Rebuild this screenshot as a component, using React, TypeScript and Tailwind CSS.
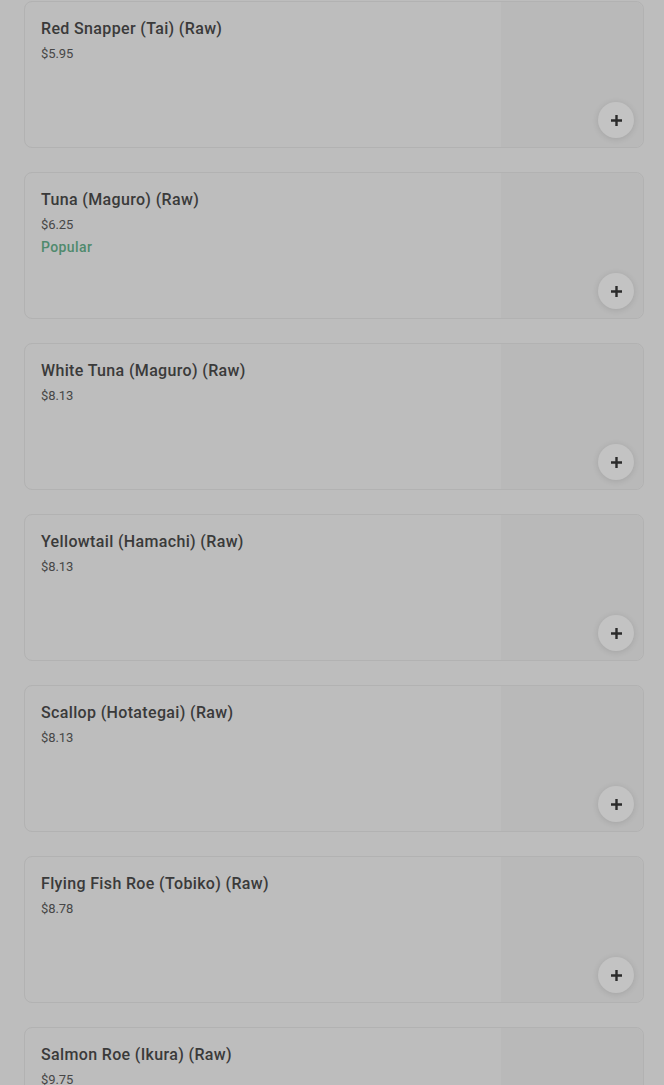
import React from 'react';

type MenuItemTypes = {
  name: string;
  price: string;
  popular?: boolean;
};

const items: MenuItemTypes[] = [
  { name: 'Red Snapper (Tai) (Raw)', price: '$5.95' },
  { name: 'Tuna (Maguro) (Raw)', price: '$6.25', popular: true },
  { name: 'White Tuna (Maguro) (Raw)', price: '$8.13' },
  { name: 'Yellowtail (Hamachi) (Raw)', price: '$8.13' },
  { name: 'Scallop (Hotategai) (Raw)', price: '$8.13' },
  { name: 'Flying Fish Roe (Tobiko) (Raw)', price: '$8.78' },
  { name: 'Salmon Roe (Ikura) (Raw)', price: '$9.75' },
];

const PlusIcon = () => (
  <svg width="13" height="13" viewBox="0 0 13 13" fill="none">
    <path d="M6.5 1v11M1 6.5h11" stroke="#2b2b2b" strokeWidth="2.4" />
  </svg>
);

const MenuItem: React.FC<MenuItemTypes> = ({ name, price, popular }) => {
  return (
    <div className="flex h-[147px] shrink-0 rounded-lg border border-[#b2b2b2] bg-[#bdbdbd]">
      <div className="flex flex-1 flex-col px-4 pt-[15px]">
        <p className="text-[16px] leading-6 font-medium tracking-[0.35px] text-[#3a3a3a]">{name}</p>
        <p className="mt-[3px] text-[13px] leading-5 tracking-[-0.1px] text-[#474747]">{price}</p>
        {popular && (
          <p className="text-[14px] leading-6 font-medium tracking-[0.4px] text-[#4f8a6d]">Popular</p>
        )}
      </div>
      <div className="relative w-[142px] rounded-r-lg bg-[#b9b9b9]">
        <button className="absolute right-[9px] bottom-[9px] flex h-9 w-9 items-center justify-center rounded-full bg-[#c3c3c3] shadow-[0_1px_6px_rgba(0,0,0,0.12)]">
          <PlusIcon />
        </button>
      </div>
    </div>
  );
};

const App = () => {
  return (
    <div className="h-[1085px] overflow-hidden bg-[#bdbdbd] font-['Roboto',sans-serif]">
      <div className="flex flex-col gap-6 px-6 pt-[1px] pr-[20px]">
        {items.map(item => (
          <MenuItem key={item.name} {...item} />
        ))}
      </div>
    </div>
  );
};

export default App;
